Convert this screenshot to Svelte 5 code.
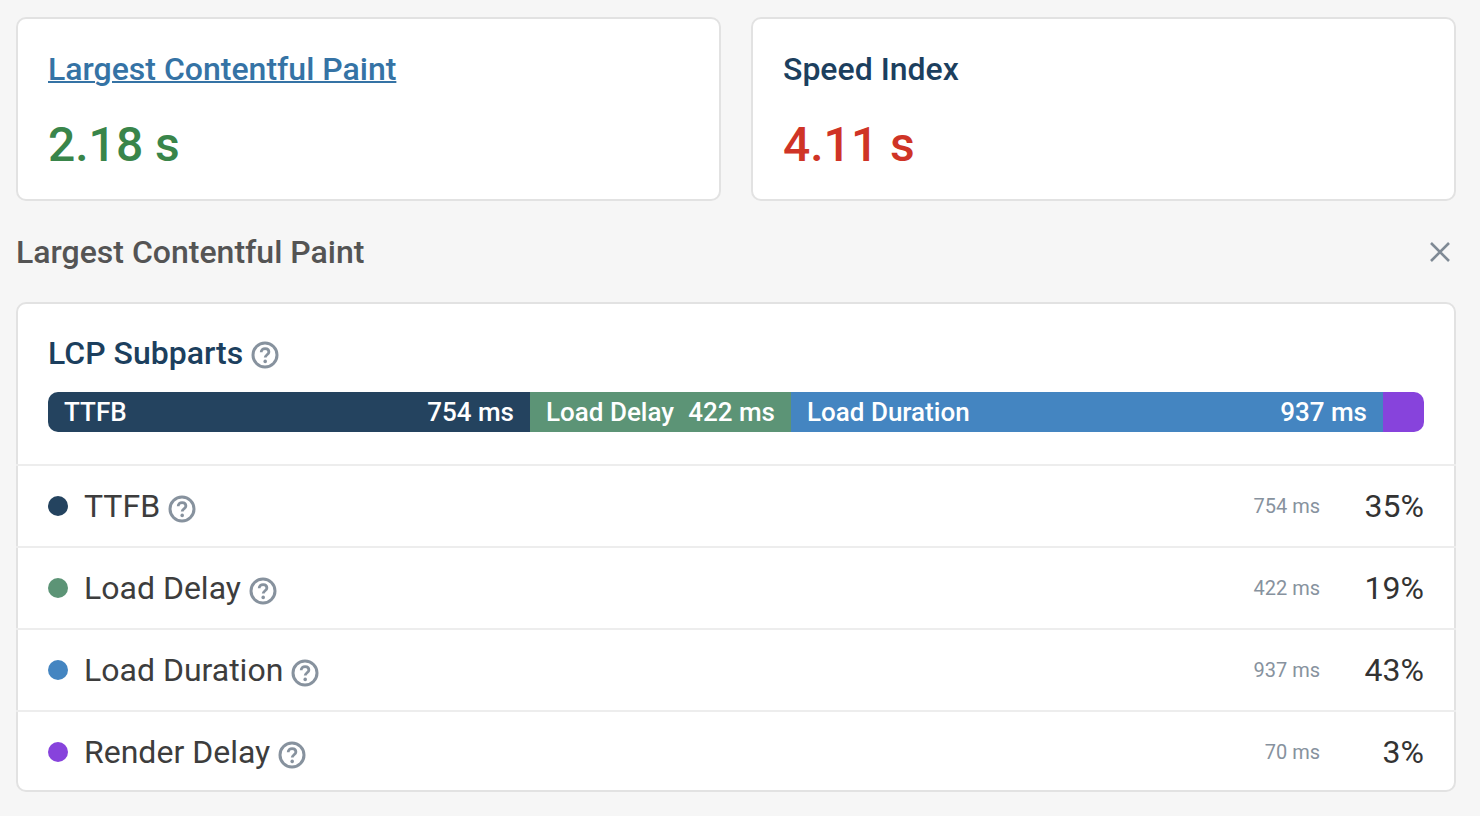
<script>
  const segments = [
    { name: "TTFB", value: "754 ms", pct: "35%", color: "#24435f", width: 482 },
    { name: "Load Delay", value: "422 ms", pct: "19%", color: "#5c9476", width: 261 },
    { name: "Load Duration", value: "937 ms", pct: "43%", color: "#4485c1", width: 592 },
    { name: "Render Delay", value: "70 ms", pct: "3%", color: "#8743dc", width: 41 },
  ];
</script>

{#snippet help()}
  <svg class="help" viewBox="0 0 28 28" aria-hidden="true">
    <circle cx="14" cy="14" r="12" fill="none" stroke="#87929e" stroke-width="3" />
    <path d="M10.2 11.2c0-2.2 1.7-3.6 3.9-3.6s3.8 1.3 3.8 3.3c0 2.8-3.7 2.9-3.7 5.7" fill="none" stroke="#87929e" stroke-width="2.8" />
    <circle cx="14.2" cy="20.4" r="1.8" fill="#87929e" />
  </svg>
{/snippet}

<main class="page">
  <div class="metrics">
    <section class="card metric">
      <a class="metric-title link" href="#lcp">Largest Contentful Paint</a>
      <div class="metric-value good">2.18 s</div>
    </section>
    <section class="card metric">
      <div class="metric-title">Speed Index</div>
      <div class="metric-value poor">4.11 s</div>
    </section>
  </div>

  <header class="section-head">
    <h2>Largest Contentful Paint</h2>
    <svg class="close" viewBox="0 0 20 20" aria-label="Close">
      <path d="M1 1l18 18M19 1L1 19" fill="none" stroke="#7f8a95" stroke-width="2.6" />
    </svg>
  </header>

  <section class="card panel">
    <div class="panel-top">
      <h3>LCP Subparts {@render help()}</h3>
      <div class="bar">
        {#each segments as seg}
          <div class="seg" style="width: {seg.width}px; background: {seg.color}">
            {#if seg.width > 100}
              <span>{seg.name}</span>
              <span>{seg.value}</span>
            {/if}
          </div>
        {/each}
      </div>
    </div>

    {#each segments as seg}
      <div class="row">
        <span class="dot" style="background: {seg.color}"></span>
        <span class="row-name">{seg.name}</span>
        {@render help()}
        <span class="row-ms">{seg.value}</span>
        <span class="row-pct">{seg.pct}</span>
      </div>
    {/each}
  </section>
</main>

<style>
  :global(body) {
    background: #f6f6f6;
  }

  .page {
    box-sizing: border-box;
    width: 1480px;
    height: 816px;
    padding: 17px 24px 0 16px;
    font-family: Roboto, "Liberation Sans", sans-serif;
    overflow: hidden;
  }

  .metrics {
    display: grid;
    grid-template-columns: 705px 705px;
    gap: 30px;
  }

  .card {
    box-sizing: border-box;
    background: #fff;
    border: 2px solid #e2e2e2;
    border-radius: 10px;
  }

  .metric {
    height: 184px;
    padding: 30px 30px 0;
  }

  .metric-title {
    display: block;
    font-size: 32px;
    line-height: 40px;
    font-weight: 500;
    color: #1c3f5e;
  }

  .link {
    color: #3573a5;
    text-decoration: underline;
    text-decoration-thickness: 2px;
  }

  .metric-value {
    margin-top: 23px;
    font-size: 48px;
    line-height: 66px;
    font-weight: 500;
  }

  .good {
    color: #39854a;
  }

  .poor {
    color: #cf3426;
  }

  .section-head {
    display: flex;
    align-items: center;
    justify-content: space-between;
    height: 101px;
    padding-right: 6px;
  }

  h2 {
    margin: 0;
    font-size: 32px;
    font-weight: 500;
    color: #545454;
  }

  .close {
    width: 20px;
    height: 20px;
  }

  .panel {
    height: 490px;
  }

  .panel-top {
    height: 160px;
    padding: 29px 30px 0;
    box-sizing: border-box;
  }

  h3 {
    display: flex;
    align-items: center;
    gap: 8px;
    margin: 0;
    font-size: 32px;
    line-height: 40px;
    font-weight: 500;
    color: #1c3f5e;
  }

  .help {
    flex: none;
    width: 28px;
    height: 28px;
    margin-top: 3px;
  }

  .row .help {
    margin-top: 5px;
  }

  .bar {
    display: flex;
    height: 40px;
    margin-top: 19px;
    border-radius: 10px;
    overflow: hidden;
  }

  .seg {
    box-sizing: border-box;
    display: flex;
    align-items: center;
    justify-content: space-between;
    padding: 0 16px;
    font-size: 26px;
    font-weight: 500;
    color: #fff;
    white-space: nowrap;
  }

  .row {
    display: flex;
    align-items: center;
    height: 82px;
    margin: 0 -2px;
    padding: 0 32px;
    border-top: 2px solid #ededed;
    box-sizing: border-box;
  }

  .dot {
    width: 20px;
    height: 20px;
    border-radius: 50%;
    margin-right: 16px;
  }

  .row-name {
    font-size: 32px;
    color: #3d3d3d;
    margin-right: 8px;
  }

  .row-ms {
    margin-left: auto;
    font-size: 20px;
    color: #87929e;
  }

  .row-pct {
    width: 104px;
    text-align: right;
    font-size: 32px;
    color: #333;
  }
</style>
